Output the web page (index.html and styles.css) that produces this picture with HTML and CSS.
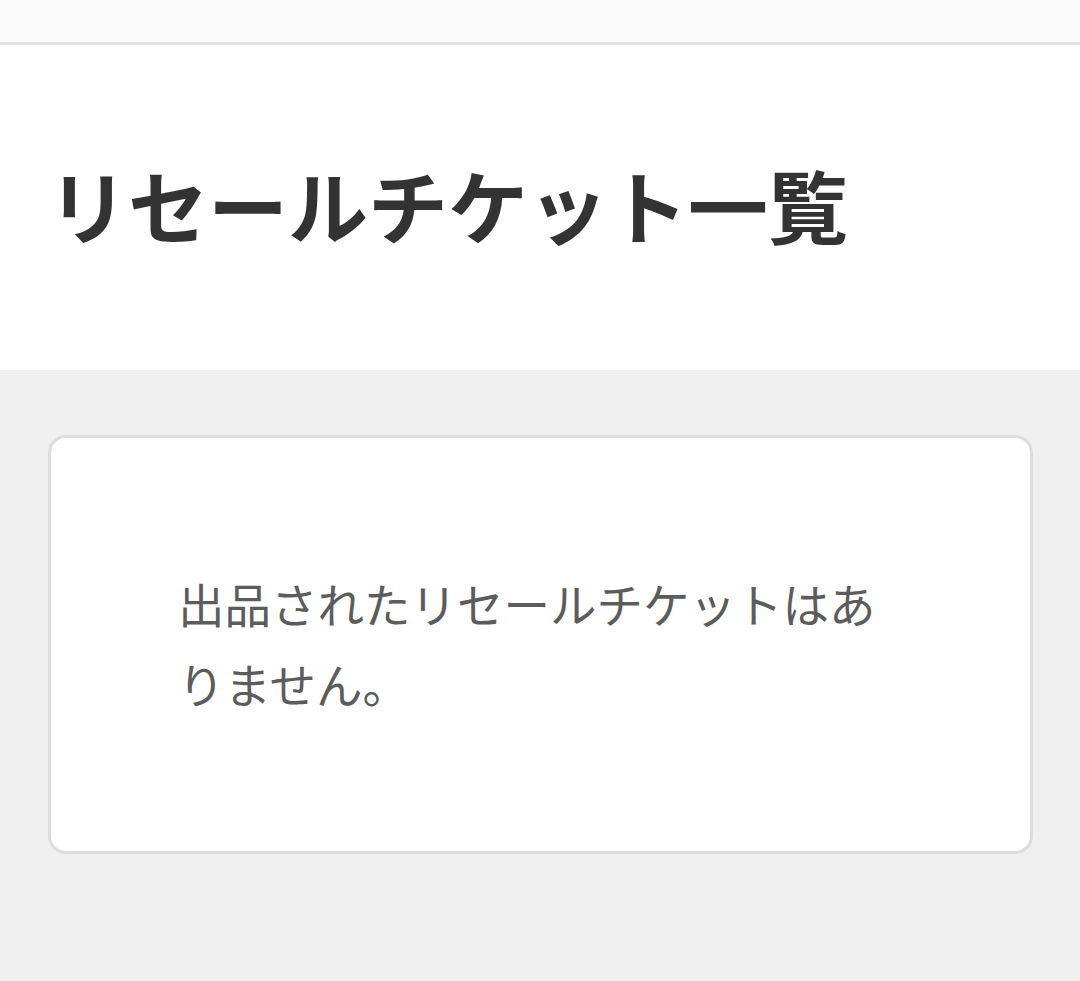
FILE: index.html
```html
<!DOCTYPE html>
<html lang="ja">
<head>
    <meta charset="UTF-8">
    <meta name="viewport" content="width=device-width, initial-scale=1.0">
    <title>リセールチケット一覧</title>
    <link rel="stylesheet" href="styles.css">
</head>
<body>
    <header class="topbar"></header>
    <section class="title-area">
        <h1 class="page-title">リセールチケット一覧</h1>
    </section>
    <main class="content">
        <div class="card">
            <p class="empty-msg">出品されたリセールチケットはありません。</p>
        </div>
    </main>
</body>
</html>
```

FILE: styles.css
```css
body{
    margin: 0;
    padding: 0;
    background-color: #f0f0f0;
    font-family: "Noto Sans CJK JP", "Noto Sans", sans-serif;
}
.topbar{
    height: 42px;
    background-color: #fafafa;
    border-bottom: 3px solid #e2e2e2;
}
.title-area{
    background-color: #fff;
    height: 325px;
    padding: 0 48px;
    display: flex;
    align-items: center;
}
.page-title{
    margin: 0;
    font-size: 80px;
    line-height: 1;
    font-weight: bold;
    color: #333;
    padding-bottom: 9px;
}
.content{
    padding: 65px 47px 129px 48px;
}
.card{
    background-color: #fff;
    border: 3px solid #dddddd;
    border-radius: 18px;
    padding: 125px 150px 128px 127px;
}
.empty-msg{
    margin: 0;
    font-size: 46.5px;
    line-height: 80px;
    color: #5c5c5c;
}
```
